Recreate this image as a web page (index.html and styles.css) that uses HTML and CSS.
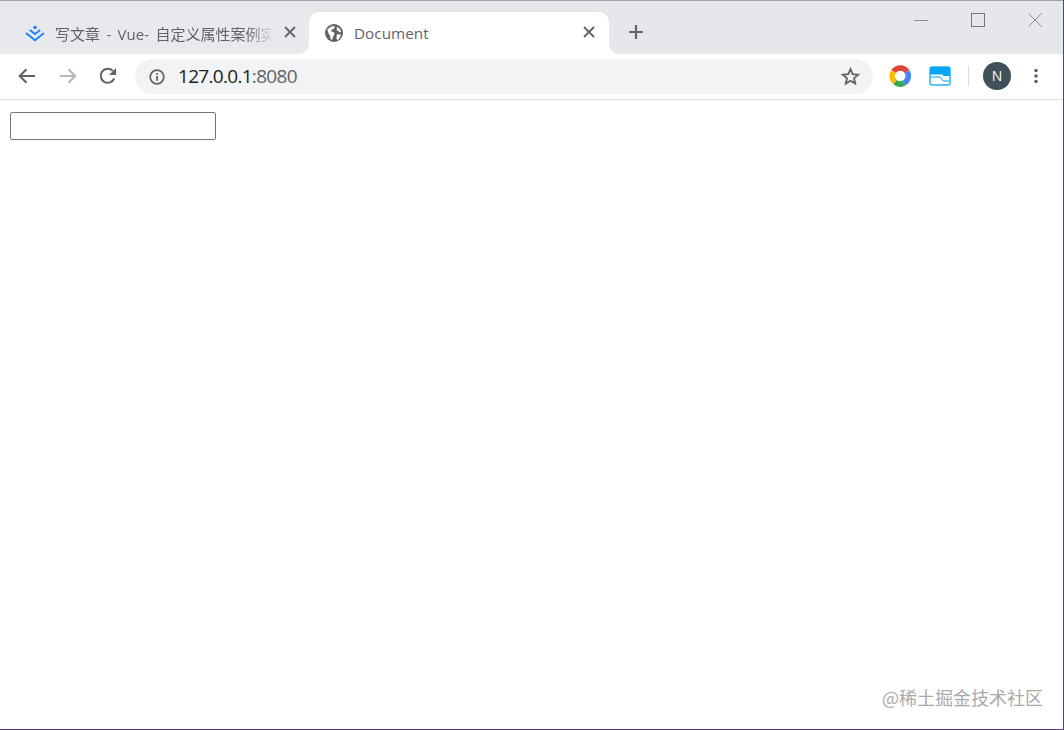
FILE: index.html
```html
<!DOCTYPE html>
<html lang="zh">
<head>
<meta charset="utf-8">
<title>Document</title>
<link rel="stylesheet" href="styles.css">
</head>
<body>
<div class="window">
  <header class="tabstrip">
    <div class="tab tab-inactive">
      <svg class="favicon" viewBox="0 0 22 18" width="22" height="18"><path d="M11 1.500 8.600 3.400 11 5.300l2.400-1.900z" fill="#1e80ff"/><path d="M5.800 5.900 11 10l5.200-4.100" fill="none" stroke="#1e80ff" stroke-width="1.900"/><path d="M2 9l9 7.200L20 9" fill="none" stroke="#1e80ff" stroke-width="1.900"/></svg>
      <span class="tab-title tab-title-fade">写文章 - Vue- 自定义属性案例实</span>
      <svg class="tab-close" viewBox="0 0 12 12" width="12" height="12"><path d="M1 1l10 10M11 1 1 11" stroke="#5f6368" stroke-width="1.800"/></svg>
    </div>
    <div class="tab tab-active">
      <svg class="favicon favicon-globe" viewBox="0 0 18 18" width="18" height="18"><circle cx="9" cy="9" r="9" fill="#5f6368"/><path d="M2.200 5.200 4 4.200l2-1.600 3-.5.800 1.500L8.600 5 7 5.600 6 7.300l2.200.6 1.300 1.200-.4 1.800-1.200 2-.6 3-1.700-.8-.6-3.400L3.600 9.600zM11.500 2.500l3.300 2.200 1.400 3.300-1.800.3-1.200-1.600-2-.4 1-1.400zM11.800 10.600l3.400-.4.800.8-2 4-2 1.200-.5-2.600z" fill="#fff"/></svg>
      <span class="tab-title tab-title-doc">Document</span>
      <svg class="tab-close" viewBox="0 0 12 12" width="12" height="12"><path d="M1 1l10 10M11 1 1 11" stroke="#5f6368" stroke-width="1.800"/></svg>
    </div>
    <svg class="new-tab" viewBox="0 0 16 16" width="16" height="16"><path d="M8 1v14M1 8h14" stroke="#5f6368" stroke-width="2.200"/></svg>
    <div class="window-controls">
      <svg viewBox="0 0 14 14" width="14" height="14"><path d="M0 7.500h14" stroke="#8a8c90"/></svg>
      <svg viewBox="0 0 14 14" width="14" height="14"><rect x=".5" y=".5" width="13" height="13" fill="none" stroke="#77797d"/></svg>
      <svg viewBox="0 0 14 14" width="14" height="14"><path d="M.5.500l13 13M13.500.500l-13 13" stroke="#8a8c90"/></svg>
    </div>
  </header>
  <nav class="toolbar">
    <svg class="nav-icon" viewBox="0 0 18 16" width="18" height="16"><path d="M17 8H2M8.500 1.200 1.700 8l6.800 6.800" fill="none" stroke="#5f6368" stroke-width="2"/></svg>
    <svg class="nav-icon" viewBox="0 0 18 16" width="18" height="16"><path d="M1 8h15M9.500 1.200 16.300 8l-6.800 6.800" fill="none" stroke="#b4b6b9" stroke-width="2"/></svg>
    <svg class="nav-icon" viewBox="1 0 18 18" width="18" height="18"><path d="M15.200 11.500A7 7 0 1 1 13.800 3.900" fill="none" stroke="#5f6368" stroke-width="2"/><path d="M17 1v7h-7z" fill="#5f6368"/></svg>
    <div class="omnibox">
      <svg class="info-icon" viewBox="0 0 16 16" width="16" height="16"><circle cx="8" cy="8" r="6.800" fill="none" stroke="#5f6368" stroke-width="1.700"/><path d="M7.100 7h1.800v4.800H7.100zM7.100 4h1.800v1.800H7.100z" fill="#5f6368"/></svg>
      <span class="url"><span class="url-host">127.0.0.1</span>:8080</span>
      <svg class="star" viewBox="0 0 20 20" width="19" height="19"><path d="M10 2.300l2.300 5.300 5.700.5-4.300 3.800 1.300 5.600-5-3-5 3 1.300-5.600L2 8.100l5.700-.5z" fill="none" stroke="#5f6368" stroke-width="1.900"/></svg>
    </div>
    <div class="extensions">
      <svg class="ext-ring" viewBox="0 0 22 22" width="22" height="22">
        <g fill="none" stroke-width="5.500">
          <path d="M4.600 6.500A8 8 0 0 1 18 6.600" stroke="#e0453a"/>
          <path d="M18 6.600A8 8 0 0 1 15 18" stroke="#4285f4"/>
          <path d="M15 18A8 8 0 0 1 6 17.200" stroke="#34a853"/>
          <path d="M6 17.200A8 8 0 0 1 4.600 6.500" stroke="#fbbc05"/>
        </g>
      </svg>
      <svg class="ext-card" viewBox="0 0 22 20" width="22" height="20"><rect x="1" y="1" width="20" height="18" rx="2" fill="#fff" stroke="#29b6f6" stroke-width="1.500"/><path d="M1 2.500A1.500 1.500 0 0 1 2.500 1h17A1.500 1.500 0 0 1 21 2.500V10h-6.500l-1-1.500H1z" fill="#03a9f4"/><path d="M2 11h8.500c2.500 0 2 4 4.500 4h5.500" fill="none" stroke="#4fc3f7" stroke-width="1.300"/></svg>
      <span class="toolbar-divider"></span>
      <span class="avatar">N</span>
      <svg class="menu-dots" viewBox="0 0 4 16" width="4" height="16"><circle cx="2" cy="2.500" r="1.800" fill="#5f6368"/><circle cx="2" cy="8" r="1.800" fill="#5f6368"/><circle cx="2" cy="13.500" r="1.800" fill="#5f6368"/></svg>
    </div>
  </nav>
  <main class="page">
    <input class="text-field" type="text">
    <div class="watermark">@稀土掘金技术社区</div>
  </main>
</div>
</body>
</html>
```
FILE: styles.css
```css
* { box-sizing: border-box; }
html, body { margin: 0; height: 100%; }
body { overflow: hidden; background: #fff; font-family: "Open Sans", "Noto Sans CJK SC", sans-serif; }
.window { position: relative; height: 730px; display: flex; flex-direction: column; border-right: 1px solid #4a4a6a; border-bottom: 1px solid #5d3f7d; }
.tabstrip { height: 54px; flex: none; display: flex; align-items: flex-end; background: #e5e7eb; border-top: 1px solid #a0a2a6; position: relative; }
.tab { height: 42px; display: flex; align-items: center; position: relative; flex: none; }
.tab-inactive { width: 309px; padding: 0 13px 0 24px; background: #e7e9ec; border-bottom-right-radius: 10px; }
.tab-active { width: 300px; padding: 0 14px 0 16px; background: #fff; border-radius: 10px 10px 0 0; margin-right: 19px; }
.tab-active::before, .tab-active::after { content: ""; position: absolute; bottom: 0; width: 10px; height: 10px; }
.tab-active::before { left: -10px; background: radial-gradient(circle at 0 0, transparent 9.500px, #fff 10px); }
.tab-active::after { right: -10px; background: radial-gradient(circle at 100% 0, transparent 9.500px, #fff 10px); }
.favicon { flex: none; margin-right: 9px; }
.favicon-globe { margin-right: 11px; }
.tab-title { flex: 1; min-width: 0; white-space: nowrap; overflow: hidden; font-size: 15px; word-spacing: 2.500px; color: #5f6368; }
.tab-title-doc { font-size: 15.300px; }
.tab-title-fade { -webkit-mask-image: linear-gradient(to right, #000 88%, transparent 100%); mask-image: linear-gradient(to right, #000 88%, transparent 100%); }
.tab-close { flex: none; margin: 0 0 2px 10px; }
.new-tab { flex: none; margin-bottom: 14px; }
.window-controls { position: absolute; top: 12px; right: 21px; display: flex; gap: 43px; }
.toolbar { height: 46px; flex: none; display: flex; align-items: center; background: #fff; border-bottom: 1px solid #dadce0; padding: 0 0 2px 18px; }
.nav-icon { flex: none; margin-right: 23px; }
.omnibox { width: 738px; height: 35px; flex: none; margin: 2px 0 0 -6px; background: #f1f3f4; border-radius: 18px; display: flex; align-items: center; padding: 0 13px 0 14px; }
.info-icon { flex: none; margin-right: 13px; }
.url { flex: 1; padding-bottom: 2px; font-size: 19px; color: #5f6368; font-family: "Open Sans", sans-serif; letter-spacing: -.7px; }
.url-host { color: #202124; }
.extensions { display: flex; align-items: center; margin-left: 16px; }
.ext-card { margin-left: 18px; }
.toolbar-divider { width: 1px; height: 20px; background: #dadce0; margin: 0 14px 0 17px; }
.avatar { width: 28px; height: 28px; border-radius: 50%; background: #3f5059; color: #fff; font-size: 14px; display: flex; align-items: center; justify-content: center; }
.menu-dots { margin-left: 23px; }
.page { flex: 1; padding: 12px 10px; position: relative; }
.text-field { display: block; width: 206px; height: 28px; border: 1px solid #767676; border-radius: 2px; background: #fff; padding: 1px 2px; }
.watermark { position: absolute; right: 20px; bottom: 22px; font-size: 18px; line-height: 20px; color: #a9a9a9; font-family: "Noto Sans CJK SC", sans-serif; }
```
